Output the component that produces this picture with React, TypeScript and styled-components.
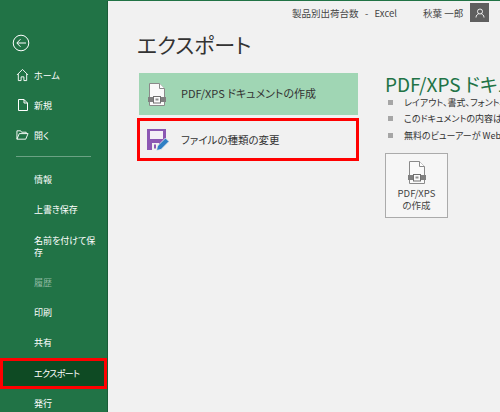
import React from 'react'
import styled, { createGlobalStyle } from 'styled-components'

const FONT = `"Noto Sans CJK JP", "Noto Sans", sans-serif`

const GlobalStyle = createGlobalStyle`
  html, body { margin: 0; padding: 0; background: #f1f1f1; }
  body { font-family: ${FONT}; font-feature-settings: "palt"; overflow: hidden; }
`

const Page = styled.div`
  position: relative;
  width: 500px;
  height: 412px;
  display: flex;
  overflow: hidden;
  background: #f1f1f1;
  border-top: 1px solid #217346;
  box-sizing: border-box;
`

const Sidebar = styled.nav`
  flex: none;
  width: 108px;
  height: 411px;
  box-sizing: border-box;
  background: #217346;
  border-right: 1px solid #1a5c38;
  padding-top: 29px;
  color: #fff;
  overflow: hidden;
`

const BackButton = styled.div`
  height: 26px;
  padding-left: 12px;
  margin-bottom: 4px;
  display: flex;
  align-items: center;
`

const NavRow = styled.div`
  height: 30px;
  display: flex;
  align-items: center;
  padding-left: 16px;
  gap: 5px;
  font-size: 9px;
  color: #fff;
`

const IconSlot = styled.span`
  width: 13px;
  display: flex;
  justify-content: center;
`

const Divider = styled.div`
  height: 1px;
  margin: 6px 16px 8px 16px;
  background: #6ba284;
`

const SubRow = styled.div<{ $dim?: boolean; $tall?: boolean; $active?: boolean }>`
  box-sizing: border-box;
  min-height: ${({ $tall, $active }) => ($tall ? 43 : $active ? 31 : 30)}px;
  display: flex;
  align-items: center;
  padding-left: ${({ $active }) => ($active ? 31 : 34)}px;
  padding-right: 8px;
  font-size: 9px;
  line-height: 12px;
  letter-spacing: ${({ $active }) => ($active ? '-0.6px' : '0')};
  color: ${({ $dim }) => ($dim ? '#8fb9a2' : '#fff')};
  background: ${({ $active }) => ($active ? '#0e4a23' : 'transparent')};
  border: ${({ $active }) => ($active ? '3px solid #f00' : 'none')};
`

const Main = styled.main`
  flex: 1;
  min-width: 0;
  padding: 26px 0 0 29px;
  overflow: hidden;
`

const TopBar = styled.div`
  position: absolute;
  top: 2px;
  left: 292px;
  width: 208px;
  display: flex;
  align-items: center;
  font-size: 9.5px;
  color: #444;
`

const DocTitle = styled.span`
  width: 131px;
  white-space: pre;
`

const UserName = styled.span`
  width: 47px;
  white-space: nowrap;
`

const Avatar = styled.span`
  width: 19px;
  height: 19px;
  background: #5f5f5f;
  display: flex;
  align-items: center;
  justify-content: center;
`

const Title = styled.h1`
  margin: 0 0 12px 0;
  font-size: 21px;
  font-weight: 400;
  line-height: 34px;
  color: #333;
  white-space: nowrap;
`

const Columns = styled.div`
  display: flex;
  width: 392px;
`

const ListColumn = styled.div`
  flex: none;
  width: 222px;
  display: flex;
  flex-direction: column;
  gap: 3px;
`

const ExportItem = styled.div<{ $selected?: boolean; $marked?: boolean }>`
  box-sizing: border-box;
  height: ${({ $marked }) => ($marked ? 43 : 42)}px;
  margin-left: ${({ $marked }) => ($marked ? 0 : 2)}px;
  margin-right: ${({ $marked }) => ($marked ? 0 : 1)}px;
  padding-left: ${({ $marked }) => ($marked ? 6 : 9)}px;
  display: flex;
  align-items: center;
  gap: ${({ $marked }) => ($marked ? 12 : 15)}px;
  font-size: ${({ $marked }) => ($marked ? 10.5 : 11)}px;
  color: #333;
  white-space: nowrap;
  background: ${({ $selected }) => ($selected ? '#a0d6b4' : 'transparent')};
  border: ${({ $marked }) => ($marked ? '3px solid #f00' : 'none')};
`

const ItemLabel = styled.span<{ $raised?: boolean }>`
  padding-bottom: ${({ $raised }) => ($raised ? 3 : 0)}px;
`

const DetailColumn = styled.div`
  flex: none;
  width: 170px;
  padding: 0 0 0 26px;
  overflow: hidden;
`

const DetailTitle = styled.h2`
  margin: 0;
  font-size: 19px;
  font-weight: 400;
  line-height: 21px;
  color: #217346;
  white-space: nowrap;
`

const Bullets = styled.ul`
  list-style: none;
  margin: 0 0 9px 0;
  padding: 0;
`

const Bullet = styled.li`
  height: 16.5px;
  display: flex;
  align-items: center;
  gap: 11px;
  padding-left: 3px;
  font-size: 9px;
  color: #333;
  white-space: nowrap;

  &::before {
    content: '';
    flex: none;
    width: 5px;
    height: 5px;
    background: #a6a6a6;
  }
`

const CreateButton = styled.div`
  box-sizing: border-box;
  width: 63px;
  height: 65px;
  border: 1px solid #ababab;
  background: #f6f6f6;
  display: flex;
  flex-direction: column;
  align-items: center;
  padding-top: 7px;
  font-size: 9.5px;
  line-height: 12px;
  color: #444;
  text-align: center;

  svg {
    margin-bottom: 3px;
  }
`

const PdfIcon = () => (
  <svg width="18" height="23" viewBox="0 0 18 23" fill="none">
    <path d="M1.500 .5h10l5 5v17h-15z" fill="#fafafa" stroke="#8a8a8a" strokeWidth="1" />
    <path d="M11.500 .5v5h5" fill="#fff" stroke="#8a8a8a" strokeWidth="1" />
    <rect x="0" y="14" width="18" height="5" fill="#808080" />
    <rect x="5.500" y="13.500" width="7" height="6.500" fill="#fafafa" stroke="#707070" strokeWidth="1" />
    <rect x="7.500" y="15.500" width="3" height="2" fill="#909090" />
  </svg>
)

const SaveAsIcon = () => (
  <svg width="23" height="23" viewBox="0 0 23 23" fill="none">
    <path d="M1 1h19v12l-8 9H1z" fill="#8b57b3" />
    <rect x="4" y="3" width="13" height="8" fill="#f4f0f7" />
    <rect x="6" y="15" width="7" height="7" fill="#f1f1f1" />
    <rect x="8" y="16.500" width="2" height="4" fill="#8b57b3" />
    <path d="M10.500 22.500l1-4.500 8-8 3.500 3.500-8 8z" fill="#2f7fc4" stroke="#f1f1f1" strokeWidth="0.8" />
  </svg>
)

const App: React.FC = () => (
  <Page>
    <GlobalStyle />
    <Sidebar>
      <BackButton>
        <svg width="18" height="18" viewBox="0 0 18 18" fill="none" stroke="#fff" strokeWidth="1">
          <circle cx="9" cy="9" r="7.800" />
          <path d="M14 9H5M8.500 5.200 4.800 9l3.700 3.800" />
        </svg>
      </BackButton>
      <NavRow>
        <IconSlot>
          <svg width="14" height="14" viewBox="0 0 14 14" fill="none" stroke="#fff" strokeWidth="1">
            <path d="M1 7 7 1l6 6M2.500 6v7h3V9h3v4h3V6" />
          </svg>
        </IconSlot>
        ホーム
      </NavRow>
      <NavRow>
        <IconSlot>
          <svg width="12" height="14" viewBox="0 0 12 14" fill="none" stroke="#fff" strokeWidth="1">
            <path d="M1.500 1.500h5.500l3.500 3.500v7.500h-9zM7 1.500V5h3.500" />
          </svg>
        </IconSlot>
        新規
      </NavRow>
      <NavRow>
        <IconSlot>
          <svg width="14" height="12" viewBox="0 0 14 12" fill="none" stroke="#fff" strokeWidth="1">
            <path d="M1 10.500v-9h4l1 1.500h5v1.500M1 10.500h9.500L13 4.500H3.500z" />
          </svg>
        </IconSlot>
        開く
      </NavRow>
      <Divider />
      <SubRow>情報</SubRow>
      <SubRow>上書き保存</SubRow>
      <SubRow $tall>名前を付けて保存</SubRow>
      <SubRow $dim>履歴</SubRow>
      <SubRow>印刷</SubRow>
      <SubRow>共有</SubRow>
      <SubRow $active>エクスポート</SubRow>
      <SubRow>発行</SubRow>
    </Sidebar>
    <TopBar>
      <DocTitle>製品別出荷台数   -   Excel</DocTitle>
      <UserName>秋葉 一郎</UserName>
      <Avatar>
        <svg width="10" height="10" viewBox="0 0 10 10" fill="none" stroke="#fff" strokeWidth="0.9">
          <circle cx="5" cy="3.500" r="2.500" />
          <path d="M1 9.500c0-2 1.500-3.500 2.500-3.500M9 9.500C9 7.500 7.500 6 6.500 6" />
        </svg>
      </Avatar>
    </TopBar>
    <Main>
      <Title>エクスポート</Title>
      <Columns>
        <ListColumn>
          <ExportItem $selected>
            <PdfIcon />
            <ItemLabel $raised>PDF/XPS ドキュメントの作成</ItemLabel>
          </ExportItem>
          <ExportItem $marked>
            <SaveAsIcon />
            <ItemLabel>ファイルの種類の変更</ItemLabel>
          </ExportItem>
        </ListColumn>
        <DetailColumn>
          <DetailTitle>PDF/XPS ドキュメントの作成</DetailTitle>
          <Bullets>
            <Bullet>レイアウト、書式、フォント、画像を保持します</Bullet>
            <Bullet>このドキュメントの内容は簡単には変更できません</Bullet>
            <Bullet>無料のビューアーが Web 上で入手できます</Bullet>
          </Bullets>
          <CreateButton>
            <PdfIcon />
            <span>PDF/XPS</span>
            <span>の作成</span>
          </CreateButton>
        </DetailColumn>
      </Columns>
    </Main>
  </Page>
)

export default App
